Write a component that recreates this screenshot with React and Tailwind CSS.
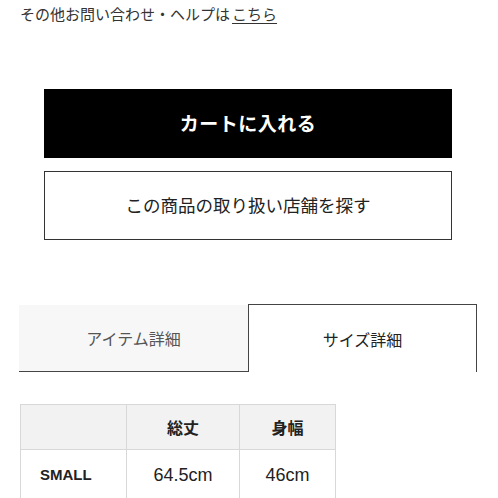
import React from 'react';

const jp = { fontFamily: '"Noto Sans CJK JP", "Noto Sans", sans-serif' };
const latin = { fontFamily: '"Liberation Sans", "Noto Sans CJK JP", sans-serif' };

const rows = [{ size: 'SMALL', length: '64.5cm', width: '46cm' }];

export default function App() {
  return (
    <div className="w-[498px] h-[498px] overflow-hidden bg-white text-[#333]" style={jp}>
      {/* help link */}
      <p className="pl-5 pt-[4px] text-[15px] leading-[20px] text-[#333]">
        その他お問い合わせ・ヘルプは<span className="ml-[2px] underline underline-offset-[3px]">こちら</span>
      </p>

      {/* buttons */}
      <div className="mt-[65px] ml-[44px] w-[408px] flex flex-col gap-[13px]">
        <button className="h-[69px] bg-black text-white text-[19px] font-bold tracking-[0.5px] flex items-center justify-center">
          カートに入れる
        </button>
        <button className="h-[69px] bg-white border-[1.5px] border-[#333] text-[#222] text-[17.5px] flex items-center justify-center">
          この商品の取り扱い店舗を探す
        </button>
      </div>

      {/* tabs */}
      <div className="mt-[64px] ml-[19px] w-[458px] flex items-end">
        <div className="w-[229px] h-[67px] bg-[#f7f7f7] border-b-[1.5px] border-[#444] flex items-center justify-center text-[16px] text-[#555]">
          アイテム詳細
        </div>
        <div className="w-[229px] h-[68px] bg-white border-t-[1.5px] border-x-[1.5px] border-[#444] flex items-center justify-center text-[16px] text-[#222]">
          サイズ詳細
        </div>
      </div>

      {/* size table */}
      <table className="mt-[32px] ml-5 border-collapse text-[#222]">
        <thead>
          <tr className="bg-[#f2f2f2]">
            <th className="w-[106px] h-[45px] border border-[#d8d8d8]"></th>
            <th className="w-[113px] h-[45px] border border-[#d8d8d8] text-[16px] font-bold">総丈</th>
            <th className="w-[96px] h-[45px] border border-[#d8d8d8] text-[16px] font-bold">身幅</th>
          </tr>
        </thead>
        <tbody>
          {rows.map((r) => (
            <tr key={r.size}>
              <td className="h-[52px] border border-[#d8d8d8] pl-[19px] text-[15px] font-bold" style={latin}>
                {r.size}
              </td>
              <td className="h-[52px] border border-[#d8d8d8] text-center text-[18px]" style={latin}>
                {r.length}
              </td>
              <td className="h-[52px] border border-[#d8d8d8] text-center text-[18px]" style={latin}>
                {r.width}
              </td>
            </tr>
          ))}
        </tbody>
      </table>
    </div>
  );
}
